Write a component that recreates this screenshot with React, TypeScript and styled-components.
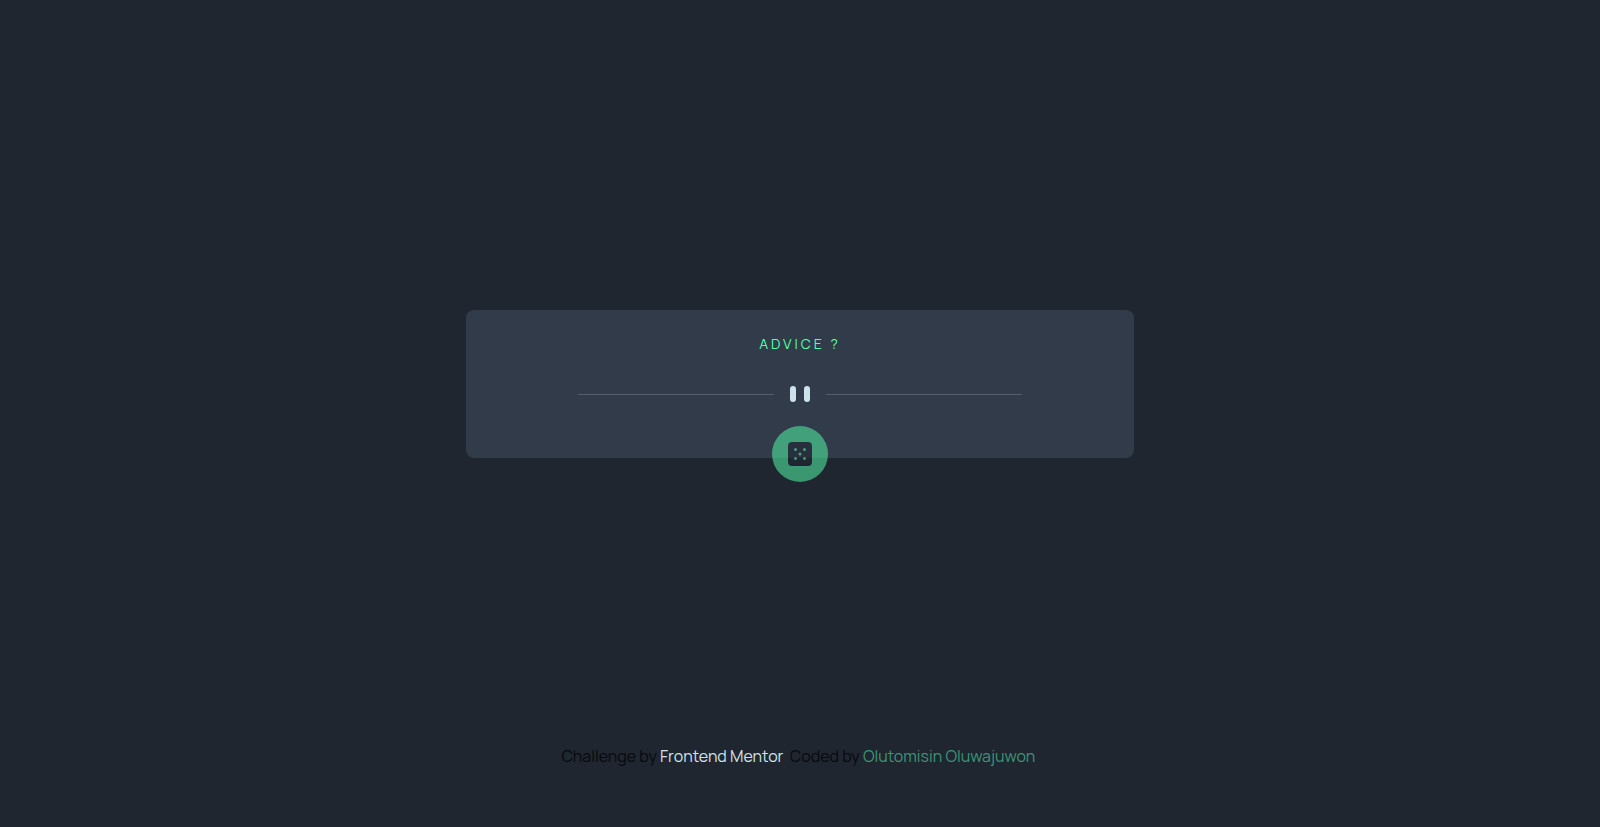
import React from 'react';
import styled, { createGlobalStyle } from 'styled-components';

const GlobalStyle = createGlobalStyle`
  *, *::before, *::after { box-sizing: border-box; }
  body {
    margin: 0;
    background: #1f2630;
    color: #07090c;
    font-family: Manrope, Inter, "Liberation Sans", sans-serif;
    font-size: 16px;
    line-height: 24px;
  }
`;

const Page = styled.div`
  display: flex;
  flex-direction: column;
  min-height: 100vh;
`;

const Main = styled.main`
  flex: 1;
  display: flex;
  align-items: center;
  justify-content: center;
  padding: 82px 16px 0;
`;

const Card = styled.section`
  display: flex;
  flex-direction: column;
  align-items: center;
  width: 100%;
  max-width: 668px;
  height: 148px;
  padding: 22px 24px 0;
  border-radius: 8px;
  background: #313b49;
`;

const Title = styled.h1`
  margin: 0 0 30px;
  color: #53ffaa;
  font-size: 14px;
  font-weight: 400;
  line-height: 24px;
  letter-spacing: 3px;
`;

const Divider = styled.svg`
  display: block;
  flex: none;
  width: 444px;
  max-width: 100%;
  height: 16px;
`;

const DiceButton = styled.button`
  display: grid;
  place-items: center;
  flex: none;
  width: 56px;
  height: 56px;
  margin-top: 24px;
  padding: 0;
  border: 0;
  border-radius: 50%;
  background: #53ffaa;
  color: #202733;
  opacity: 0.52;
  cursor: pointer;
`;

const Footer = styled.footer`
  padding: 59px 16px;
  text-align: center;
`;

const Credit = styled.a<{ $color: string }>`
  color: ${({ $color }) => $color};
  text-decoration: none;
`;

export default function App() {
  return (
    <Page>
      <GlobalStyle />
      <Main>
        <Card>
          <Title>ADVICE ?</Title>
          <Divider viewBox="0 0 444 16" aria-hidden="true">
            <path fill="#535e6f" d="M0 8h196v1H0zM248 8h196v1H248z" />
            <rect x="212" width="6" height="16" rx="3" fill="#cee3e9" />
            <rect x="226" width="6" height="16" rx="3" fill="#cee3e9" />
          </Divider>
          <DiceButton type="button" aria-label="New advice">
            <svg width="24" height="24" viewBox="0 0 24 24" aria-hidden="true">
              <path
                fill="currentColor"
                fillRule="evenodd"
                d="M20 0H4a4 4 0 0 0-4 4v16a4 4 0 0 0 4 4h16a4 4 0 0 0 4-4V4a4 4 0 0 0-4-4ZM7.500 18a1.500 1.500 0 1 1 0-3 1.500 1.500 0 0 1 0 3Zm0-9a1.500 1.500 0 1 1 0-3 1.500 1.500 0 0 1 0 3Zm4.500 4.500a1.500 1.500 0 1 1 0-3 1.500 1.500 0 0 1 0 3Zm4.500 4.500a1.500 1.500 0 1 1 0-3 1.500 1.500 0 0 1 0 3Zm0-9a1.500 1.500 0 1 1 0-3 1.500 1.500 0 0 1 0 3Z"
              />
            </svg>
          </DiceButton>
        </Card>
      </Main>
      <Footer>
        Challenge by <Credit href="#frontend-mentor" $color="#cee3e9">Frontend Mentor</Credit>
        {'\u00a0 '}Coded by <Credit href="#author" $color="#3b9577">Olutomisin Oluwajuwon</Credit>
        {'\u00a0'}
      </Footer>
    </Page>
  );
}
